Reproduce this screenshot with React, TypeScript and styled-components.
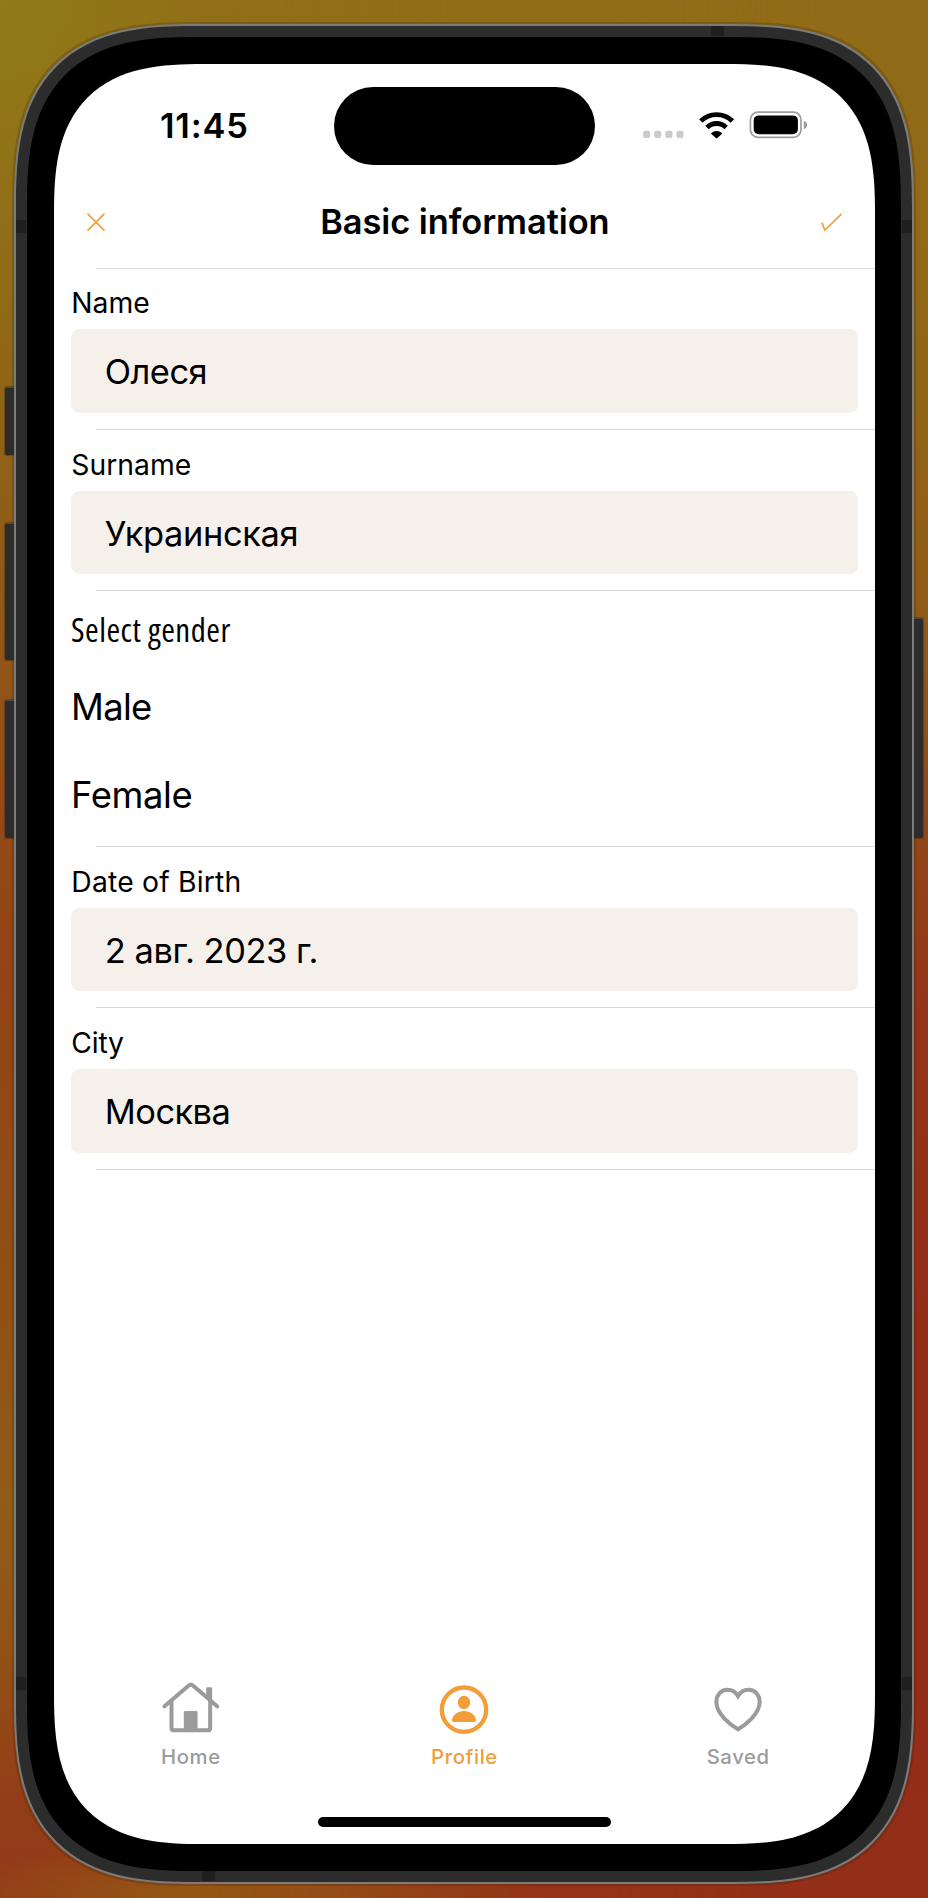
import React from "react";
import styled, { createGlobalStyle } from "styled-components";

const accent = "#f29d38";
const muted = "#9b9b9b";

const GlobalStyle = createGlobalStyle`
  * { box-sizing: border-box; }
  body {
    margin: 0;
    font-family: Inter, "Liberation Sans", sans-serif;
    color: #000;
  }
`;

const Desktop = styled.div`
  position: relative;
  width: 928px;
  height: 1898px;
  padding: 24px 14px 14.5px;
  overflow: hidden;
  background:
    radial-gradient(ellipse 200px 280px at 0 0, #917a18, rgba(145, 122, 24, 0)),
    radial-gradient(ellipse 300px 60px at 250px 1898px, #945515 30%, rgba(148, 85, 21, 0)),
    linear-gradient(#907017 0, #906a17 300px, #905a17 600px, #944818 850px, #934318 980px,
      #905015 1300px, #905c17 1500px, #925316 1640px, #933d18 1800px, #933a18 1898px);

  &::before {
    content: "";
    position: absolute;
    inset: 0;
    background: linear-gradient(#906c17 0, #906917 300px, #905c17 600px, #904a18 800px,
      #93351a 1000px, #942d19 1250px, #942a18 1550px, #932f19 1898px);
    mask-image: linear-gradient(to right, transparent 200px, #000 850px);
  }
`;

const Bezel = styled.div`
  position: relative;
  width: 900px;
  height: 1859.5px;
  padding: 2px;
  border-radius: 183px;
  corner-shape: superellipse(1.45);
  background: #7b7b79;
  box-shadow: 0 0 0 2px rgba(50, 30, 10, 0.22);
`;

const Rim = styled.div`
  height: 100%;
  padding: 11px;
  border-radius: 181px;
  corner-shape: superellipse(1.45);
  background: #2c2c2c;
`;

const Glass = styled.div`
  height: 100%;
  padding: 27px 26px 26.5px 27px;
  border-radius: 170px;
  corner-shape: superellipse(1.45);
  background: #000;
`;

const Screen = styled.main`
  display: flex;
  flex-direction: column;
  width: 821px;
  height: 1780px;
  overflow: hidden;
  border-radius: 150px;
  corner-shape: superellipse(1.45);
  background: #fff;
`;

const SideButton = styled.i<{ $side: "left" | "right"; $top: number; $height: number }>`
  position: absolute;
  ${(p) => p.$side}: -9px;
  top: ${(p) => p.$top}px;
  width: 9px;
  height: ${(p) => p.$height}px;
  border-top: 1px solid #4a4a46;
  border-radius: ${(p) => (p.$side === "left" ? "2px 0 0 2px" : "0 2px 2px 0")};
  background: #2c2c2c;
  box-shadow: 0 0 1px 1px rgba(40, 30, 15, 0.35);
  clip-path: ${(p) => (p.$side === "left" ? "inset(-2px 0 -2px -2px)" : "inset(-2px -2px -2px 0)")};
`;

const Antenna = styled.i<{ $x: number; $y: number; $flat?: boolean }>`
  position: absolute;
  left: ${(p) => p.$x}px;
  top: ${(p) => p.$y}px;
  width: ${(p) => (p.$flat ? 13 : 10)}px;
  height: ${(p) => (p.$flat ? 10 : 13)}px;
  background: #1f1f1f;
`;

const StatusBar = styled.header`
  display: grid;
  grid-template-columns: 279.7px 261.6px 1fr;
  flex: none;
  height: 100.5px;
  padding-top: 23px;
`;

const Time = styled.time`
  padding: 17px 0 0 106px;
  font-size: 34.4px;
  line-height: 44px;
  font-weight: 600;
  letter-spacing: 0.8px;
`;

const Island = styled.div`
  height: 77.5px;
  border-radius: 39px;
  background: #000;
`;

const StatusIcons = styled.svg`
  width: 168px;
  height: 30px;
  margin: 23px 0 0 45.7px;
`;

const NavBar = styled.nav`
  display: flex;
  align-items: center;
  justify-content: space-between;
  flex: none;
  height: 103.2px;
  padding: 11px 33px 0;
`;

const NavIcon = styled.svg`
  width: 21px;
  height: 18px;
  fill: none;
  stroke: ${accent};
  stroke-width: 1.6;
  stroke-linecap: round;
`;

const Title = styled.h1`
  margin: 0;
  padding-left: 0.8px;
  font-size: 34.4px;
  line-height: 44px;
  font-weight: 600;
  letter-spacing: -0.06px;
`;

const Divider = styled.hr`
  flex: none;
  width: calc(100% - 42px);
  height: 1px;
  margin: 0 0 0 42px;
  border: 0;
  background: #d8d8d8;
`;

const Field = styled.section`
  display: flex;
  flex-direction: column;
  flex: none;
  gap: 9px;
  height: 160.3px;
  padding: 17.7px 17px 0;
`;

const Label = styled.label<{ $spacing?: number }>`
  height: 34px;
  padding-left: 0.3px;
  font-size: 28.3px;
  line-height: 34px;
  letter-spacing: ${(p) => p.$spacing ?? 0}px;
`;

const Value = styled.div<{ $spacing: number }>`
  height: 83.6px;
  padding-left: 33.8px;
  border-radius: 8.5px;
  background: #f5f0ea;
  font-size: 34.4px;
  line-height: 85.2px;
  letter-spacing: ${(p) => p.$spacing}px;
`;

const Gender = styled.section`
  display: flex;
  flex-direction: column;
  flex: none;
  height: 254.8px;
  padding: 18.7px 17px 0;
`;

const GenderTitle = styled.div`
  font-family: "Open Sans", "Noto Sans", sans-serif;
  font-size: 33px;
  font-stretch: 75%;
  line-height: 40px;
  letter-spacing: 0.5px;
  margin-bottom: 34.8px;
`;

const Option = styled.div<{ $spacing: number }>`
  height: 44px;
  margin-bottom: 43.8px;
  font-size: 36.4px;
  line-height: 44px;
  letter-spacing: ${(p) => p.$spacing}px;
`;

const TabBar = styled.footer`
  display: grid;
  grid-template-columns: repeat(3, 1fr);
  flex: none;
  margin-top: auto;
`;

const Tab = styled.div<{ $active?: boolean }>`
  display: flex;
  flex-direction: column;
  align-items: center;
  gap: 5px;
  color: ${(p) => (p.$active ? accent : muted)};
  font-size: 20.3px;
  line-height: 24px;
  font-weight: 500;
  letter-spacing: 0.6px;
`;

const TabIcon = styled.svg`
  width: 60px;
  height: 60px;
  fill: none;
  stroke: currentColor;
  stroke-width: 12;
`;

const HomeIndicator = styled.div`
  flex: none;
  width: 292.5px;
  height: 10.5px;
  margin: 47.5px auto 17px;
  border-radius: 6px;
  background: #000;
`;

interface FormFieldProps {
  label: string;
  value: string;
  labelSpacing?: number;
  spacing: number;
}

const FormField = ({ label, value, labelSpacing, spacing }: FormFieldProps) => (
  <>
    <Field>
      <Label $spacing={labelSpacing}>{label}</Label>
      <Value $spacing={spacing}>{value}</Value>
    </Field>
    <Divider />
  </>
);

export default function App() {
  return (
    <Desktop>
      <GlobalStyle />
      <Bezel>
        <SideButton $side="left" $top={362.5} $height={68.5} />
        <SideButton $side="left" $top={499} $height={137} />
        <SideButton $side="left" $top={676} $height={137.5} />
        <SideButton $side="right" $top={594} $height={219.5} />
        <Rim>
          <Antenna $x={2} $y={196} />
          <Antenna $x={888} $y={196} />
          <Antenna $x={2} $y={1653} />
          <Antenna $x={888} $y={1653} />
          <Antenna $x={697} $y={2} $flat />
          <Antenna $x={188} $y={1847} $flat />
          <Glass>
            <Screen>
              <StatusBar>
                <Time>11:45</Time>
                <Island />
                <StatusIcons viewBox="641 110 168 30">
                  <g fill="#cbcbcb">
                    <rect x="643" y="130.8" width="7.2" height="7.2" rx="2.2" />
                    <rect x="654.1" y="130.8" width="7.2" height="7.2" rx="2.2" />
                    <rect x="665.3" y="130.8" width="7.2" height="7.2" rx="2.2" />
                    <rect x="676.4" y="130.8" width="7.2" height="7.2" rx="2.2" />
                  </g>
                  <g fill="none" stroke="#000" strokeWidth="4.9">
                    <path d="M700.8 121.1a22.6 22.6 0 0 1 31.6 0" />
                    <path d="M707 127.4a13.6 13.6 0 0 1 19.2 0" />
                  </g>
                  <path d="M711.3 133.1a7.5 7.5 0 0 1 10.6 0q.5.5 0 1l-4.6 4q-.7.5-1.4 0l-4.6-4q-.5-.5 0-1z" />
                  <rect x="750.4" y="112.2" width="50.6" height="25.2" rx="7.6" fill="none" stroke="#9d9d9d" strokeWidth="1.7" />
                  <rect x="753.7" y="115.4" width="44.2" height="18.8" rx="5" />
                  <path d="M803.8 120.8q3.2 1 3.2 4.1t-3.2 4.1z" fill="#9a9a9a" />
                </StatusIcons>
              </StatusBar>
              <NavBar>
                <NavIcon viewBox="0 0 21 18">
                  <path d="M1 1.1l16 16M17 1.1l-16 16" />
                </NavIcon>
                <Title>Basic information</Title>
                <NavIcon viewBox="0 0 21 18">
                  <path d="M1.2 10.1l2.6 7.1L20 1.4" />
                </NavIcon>
              </NavBar>
              <Divider />
              <FormField label="Name" value="Олеся" spacing={-0.5} />
              <FormField label="Surname" value="Украинская" spacing={-0.36} />
              <Gender>
                <GenderTitle>Select gender</GenderTitle>
                <Option $spacing={-0.7}>Male</Option>
                <Option $spacing={-0.4}>Female</Option>
              </Gender>
              <Divider />
              <FormField label="Date of Birth" value="2 авг. 2023 г." labelSpacing={0.2} spacing={-0.43} />
              <FormField label="City" value="Москва" labelSpacing={-0.2} spacing={-0.55} />
              <TabBar>
                <Tab>
                  <TabIcon viewBox="481.5 120 180 180" strokeLinecap="round" strokeLinejoin="round">
                    <path d="M492 199l72-62q7-6 14 0l72 62" />
                    <path d="M513 182v81q0 8 8 8h100q8 0 8-8v-81" strokeLinecap="butt" />
                    <path d="M617 174v-28q0-4 4-4h10q4 0 4 4v44z" fill="currentColor" stroke="none" />
                    <path d="M550 272v-55q0-4 4-4h33q4 0 4 4v55z" fill="currentColor" stroke="none" />
                  </TabIcon>
                  Home
                </Tab>
                <Tab $active>
                  <TabIcon viewBox="402 60 180 180">
                    <circle cx="492" cy="149" r="66.5" strokeWidth="13" />
                    <g fill="currentColor" stroke="none">
                      <ellipse cx="492" cy="127.5" rx="18.5" ry="20" />
                      <path d="M456 181c0-15 17-28 36-28s36 13 36 28q0 5-5 5h-62q-5 0-5-5z" />
                    </g>
                  </TabIcon>
                  Profile
                </Tab>
                <Tab>
                  <TabIcon viewBox="239 120 180 180">
                    <path d="M329 268c-22-13-65-46-65-82c0-21 14-37 33-37c15 0 25 7 32 19c7-12 17-19 32-19c19 0 33 16 33 37c0 36-43 69-65 82z" />
                  </TabIcon>
                  Saved
                </Tab>
              </TabBar>
              <HomeIndicator />
            </Screen>
          </Glass>
        </Rim>
      </Bezel>
    </Desktop>
  );
}
